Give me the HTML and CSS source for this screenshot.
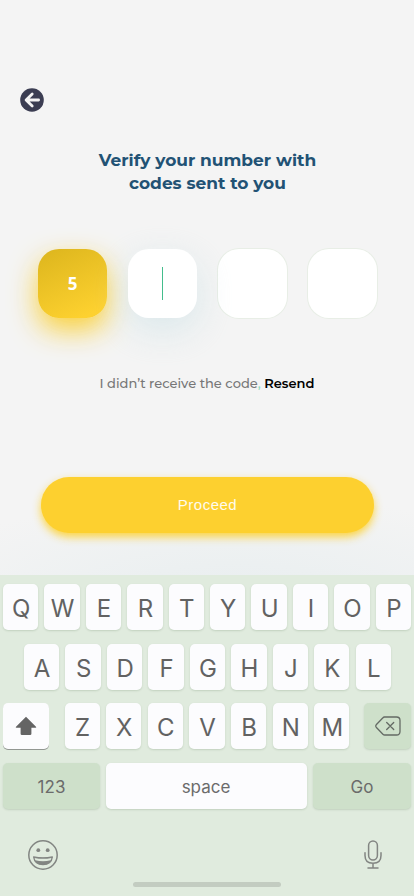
FILE: index.html
```
<!DOCTYPE html>
<html lang="en">
<head>
<meta charset="utf-8">
<meta name="viewport" content="width=device-width">
<title>Verify your number</title>
<link rel="stylesheet" href="styles.css">
</head>
<body>
<main class="screen">
  <section class="verify">
    <button class="back" aria-label="Back">
      <svg width="24" height="24" viewBox="0 0 24 24"><circle cx="12" cy="12" r="11.8" fill="#3b3d52"/><path d="M18.6 12H6.4M12.2 5.9L6.1 12l6.1 6.1" fill="none" stroke="#f4f4f4" stroke-width="2.8" stroke-linecap="round" stroke-linejoin="round"/></svg>
    </button>
    <h1>Verify your number with<br>codes sent to you</h1>
    <div class="code">
      <div class="digit filled">5</div>
      <div class="digit active"><i class="caret"></i></div>
      <div class="digit empty"></div>
      <div class="digit empty"></div>
    </div>
    <p class="resend">I didn’t receive the code<span class="comma">,</span> <b>Resend</b></p>
    <button class="proceed">Proceed</button>
  </section>
  <section class="keyboard">
    <div class="row"><span class="key">Q</span><span class="key">W</span><span class="key">E</span><span class="key">R</span><span class="key">T</span><span class="key">Y</span><span class="key">U</span><span class="key">I</span><span class="key">O</span><span class="key">P</span></div>
    <div class="row middle"><span class="key">A</span><span class="key">S</span><span class="key">D</span><span class="key">F</span><span class="key">G</span><span class="key">H</span><span class="key">J</span><span class="key">K</span><span class="key">L</span></div>
    <div class="row">
      <span class="key shift"><svg width="22" height="20" viewBox="0 0 22 20"><path d="M11 .8L21 10.800q.8.900-.5.900H16.400v6q0 1.300-1.300 1.300H6.900q-1.300 0-1.300-1.300v-6H1.500q-1.300 0-.5-.9z" fill="#646464"/></svg></span>
      <div class="letters"><span class="key">Z</span><span class="key">X</span><span class="key">C</span><span class="key">V</span><span class="key">B</span><span class="key">N</span><span class="key">M</span></div>
      <span class="key tinted delete"><svg width="26" height="20" viewBox="0 0 26 20" fill="none" stroke="#646a64" stroke-width="1.300" stroke-linecap="round" stroke-linejoin="round"><path d="M9.200 1H21.500Q25 1 25 4.500V15.500Q25 19 21.500 19H9.700Q8.700 19 7.900 18.200L1.200 11.200Q.3 10 1.200 8.800L7.700 2Q8.500 1 9.500 1zM11.700 6.500l7 7M18.700 6.500l-7 7"/></svg></span>
    </div>
    <div class="row bottom"><span class="key tinted wide">123</span><span class="key space">space</span><span class="key tinted wide">Go</span></div>
    <div class="tools">
      <svg width="30" height="30" viewBox="0 0 30 30"><circle cx="15" cy="15" r="14.200" fill="none" stroke="#828582" stroke-width="1.500"/><circle cx="10.300" cy="10.200" r="1.900" fill="#828582"/><circle cx="19.700" cy="10.200" r="1.900" fill="#828582"/><path d="M5.600 16.900Q15 18.800 24.400 16.900Q23.400 24.600 15 24.600Q6.600 24.600 5.600 16.900z" fill="#828582" stroke="#828582" stroke-width="1.200" stroke-linejoin="round"/><path d="M6.600 17.900Q15 19.600 23.400 17.900L22.600 20.300Q15 22 7.400 20.300z" fill="#e0ebde"/></svg>
      <svg width="18" height="29" viewBox="0 0 18 29" fill="none" stroke="#828582" stroke-width="1.500" stroke-linecap="round"><rect x="4.600" y="1" width="8.800" height="19" rx="4.400"/><path d="M1 12.800v2.700Q1 23.300 9 23.300T17 15.500v-2.700M9 23.300v4.500M4 27.900h10"/></svg>
    </div>
    <div class="home"></div>
  </section>
</main>
</body>
</html>
```

FILE: styles.css
```
* { box-sizing: border-box; }
body { margin: 0; background: #f4f4f4; }
button { border: 0; padding: 0; background: none; font: inherit; }
.screen {
  width: 414px;
  height: 896px;
  overflow: hidden;
  display: flex;
  flex-direction: column;
  font-family: Inter, "Liberation Sans", sans-serif;
}
.verify {
  height: 575px;
  padding-top: 88px;
  display: flex;
  flex-direction: column;
  align-items: center;
  background: radial-gradient(ellipse 340px 105px at 235px 600px, #e9eef0 0%, #ecf0f1 35%, #f4f4f4 100%);
}
.back { align-self: flex-start; width: 24px; height: 24px; margin-left: 20px; }
.back svg, .tools svg { display: block; }
h1 {
  margin: 37px 0 0 1px;
  font-family: Montserrat, Inter, sans-serif;
  font-size: 17px;
  line-height: 23px;
  font-weight: 700;
  color: #225274;
  text-align: center;
  white-space: nowrap;
}
.code { display: flex; gap: 21px; margin: 54px 0 0 1px; }
.digit {
  width: 69px;
  height: 69px;
  border-radius: 21px;
  background: #fff;
  display: flex;
  align-items: center;
  justify-content: center;
}
.filled {
  background: linear-gradient(155deg, #dcb51d, #fdd12f 88%);
  box-shadow: 0 12px 28px rgba(250, 207, 50, .95);
  color: #fff;
  font: 700 17px "Open Sans", sans-serif;
}
.active { position: relative; box-shadow: 0 12px 36px rgba(190, 220, 225, .48); }
.empty { box-shadow: 0 0 0 1px #e8eee6; }
.caret { width: 1px; height: 33px; background: #43bd8c; }
.resend {
  margin: 55px 0 0;
  height: 20px;
  font: 500 13px/20px Montserrat, Inter, sans-serif;
  color: #777;
  white-space: nowrap;
}
.resend b { color: #000; font-weight: 600; }
.comma { color: #8bd8ba; }
.proceed {
  width: 333px;
  height: 56px;
  margin: 84px 0 0 1px;
  padding-bottom: 2px;
  border-radius: 28px;
  background: #fdd02f;
  box-shadow: 0 4px 9px rgba(253, 208, 47, .9);
  color: #fffbed;
  font: 400 15px "Liberation Sans", sans-serif;
  letter-spacing: .5px;
}
.keyboard { height: 321px; padding: 9px 3px 0; background: #e0ebde; }
.row { display: flex; justify-content: space-between; height: 46px; margin-bottom: 13.6px; }
.middle { padding: 0 20px 0 21px; }
.key {
  width: 35.3px;
  height: 46px;
  border-radius: 5px;
  background: #fcfcfe;
  box-shadow: 0 1px 2px rgba(100, 130, 95, .24);
  display: flex;
  align-items: center;
  justify-content: center;
  color: #626262;
  font-size: 24px;
  font-weight: 400;
  padding: 3px 0 0 1px;
}
.letters { width: 285px; margin-left: 1px; display: flex; justify-content: space-between; }
.shift { width: 46px; box-shadow: 0 1px 0 #929792; padding: 0; }
.tinted { background: #cee0ca; }
.delete { width: 47px; padding: 0; }
.bottom .key { font-size: 17px; font-weight: 400; color: #6b6b6b; padding-left: 0; }
.bottom .wide { width: 97px; }
.bottom .space { width: 201px; margin-left: -1px; }
.bottom .wide:last-child { width: 98px; }
.tools { display: flex; justify-content: space-between; padding: 18px 29px 0 24.500px; height: 59.600px; }
.home { width: 148px; height: 5px; margin: 0 auto; border-radius: 3px; background: #c3ccc1; }
```
